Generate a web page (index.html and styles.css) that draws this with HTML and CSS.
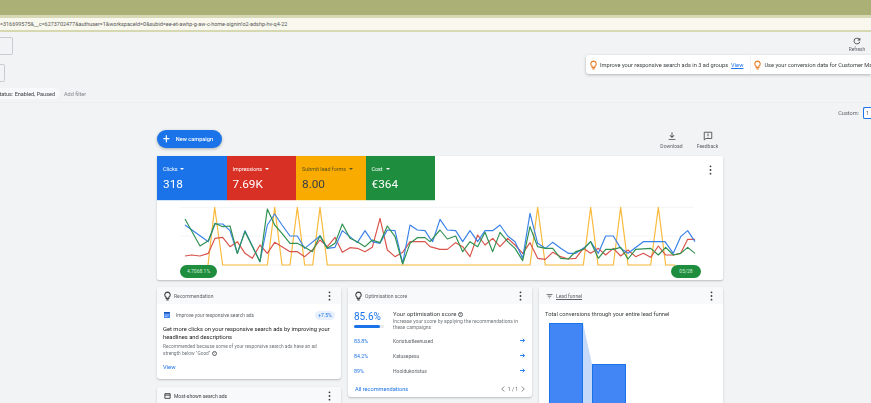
FILE: index.html
```html
<!DOCTYPE html>
<html lang="en">
<head>
<meta charset="utf-8">
<title>Overview</title>
<link rel="stylesheet" href="styles.css">
</head>
<body>
<div class="band"></div>
<div class="url">=316699575&amp;__c=6273702477&amp;authuser=1&amp;workspaceId=0&amp;subid=ee-et-awhp-g-aw-c-home-signin!o2-adshp-hv-q4-22</div>
<header class="toolbar">
  <div class="tb-left">
    <div class="stub stub-a"></div>
    <div class="stub stub-b"></div>
    <div class="filters">
      <span class="chip"><span>Campaign status: Enabled, Paused</span></span>
      <span class="add">Add filter</span>
    </div>
  </div>
  <div class="tb-right">
    <div class="refresh">
      <svg width="10" height="10" viewBox="0 0 24 24"><path fill="#444" d="M17.65 6.35A8 8 0 1 0 19.73 14h-2.08A6 6 0 1 1 12 6c1.66 0 3.14.69 4.22 1.78L13 11h7V4z"/></svg>
      <span>Refresh</span>
    </div>
    <div class="banner">
      <div class="tip">
        <svg class="bulb" width="7" height="10" viewBox="0 0 18 24"><path fill="none" stroke="#e8812b" stroke-width="2.8" d="M9 2a7 7 0 0 0-3.500 13v3h7v-3A7 7 0 0 0 9 2zM6 22h6"/></svg>
        <span>Improve your responsive search ads in 3 ad groups</span>
        <a class="view">View</a>
      </div>
      <div class="tip tip-b">
        <svg class="bulb" width="7" height="10" viewBox="0 0 18 24"><path fill="none" stroke="#e8812b" stroke-width="2.8" d="M9 2a7 7 0 0 0-3.500 13v3h7v-3A7 7 0 0 0 9 2zM6 22h6"/></svg>
        <span>Use your conversion data for Customer Match</span>
      </div>
    </div>
  </div>
</header>
<div class="custom"><span>Custom:</span><span class="date">1</span></div>

<main class="main">
  <div class="actions">
    <button class="new"><span class="plus">+</span><span>New campaign</span></button>
    <div class="act-icons">
      <div class="act">
        <svg width="10" height="10" viewBox="0 0 24 24"><path fill="#444" d="M11 3h2v10l3.500-3.500 1.400 1.400L12 16.800l-5.900-5.900 1.400-1.400L11 13zM4 19h16v2H4z"/></svg>
        <span>Download</span>
      </div>
      <div class="act">
        <svg width="10" height="10" viewBox="0 0 24 24"><path fill="none" stroke="#444" stroke-width="2" d="M3 3h18v15H7l-4 3.500z"/><path fill="#444" d="M11 6h2v6h-2zM11 13.500h2v2h-2z"/></svg>
        <span>Feedback</span>
      </div>
    </div>
  </div>

  <section class="perf">
    <div class="tiles">
      <div class="tile t-blue"><div class="lab">Clicks <i class="caret"></i></div><div class="val">318</div></div>
      <div class="tile t-red"><div class="lab">Impressions <i class="caret"></i></div><div class="val">7.69K</div></div>
      <div class="tile t-yellow"><div class="lab">Submit lead forms <i class="caret"></i></div><div class="val">8.00</div></div>
      <div class="tile t-green"><div class="lab">Cost <i class="caret"></i></div><div class="val">€364</div></div>
      <div class="tile-rest"><svg class="dots" width="3" height="10" viewBox="0 0 3 11"><circle cx="1.500" cy="1.500" r="1"/><circle cx="1.500" cy="5.500" r="1"/><circle cx="1.500" cy="9.500" r="1"/></svg></div>
    </div>
    <div class="chart">
      <svg class="plot" viewBox="21 0 1698 240" width="566" height="80">
        <g class="grid"><path d="M90 22H1630M90 108H1630M90 195H1630"/></g>
        <polyline class="l-yellow" points="174,195 194,22 218,195 352,195 374,22 396,195 420,195 442,22 464,195 488,195 510,22 532,195 1140,195 1163,22 1186,195 1300,195 1322,22 1344,195 1390,195 1412,22 1434,195 1502,195 1525,22 1547,195 1575,195"/>
        <polyline class="l-red" points="105,168 125,165 150,168 175,160 195,115 218,112 240,140 262,125 285,160 307,175 330,135 352,160 374,127 396,140 420,155 442,155 464,170 487,150 510,120 532,140 555,112 577,157 600,143 622,145 645,155 667,142 690,55 712,150 735,170 758,157 780,125 802,125 825,125 840,140 870,148 892,148 917,128 938,140 960,170 983,105 1005,135 1028,115 1050,140 1073,115 1095,135 1118,160 1140,128 1163,175 1186,178 1208,157 1232,170 1255,177 1277,175 1300,145 1322,160 1345,145 1367,165 1390,145 1412,168 1434,150 1457,170 1480,160 1502,172 1525,138 1547,165 1570,165 1592,160 1613,118 1635,118"/>
        <polyline class="l-blue" points="105,75 175,125 195,72 218,72 240,92 262,160 285,92 330,185 352,75 374,42 396,75 420,108 442,108 464,145 510,108 532,145 555,142 577,92 622,128 645,92 667,125 690,130 712,90 735,92 758,190 780,75 802,90 825,92 840,115 848,125 870,58 892,90 917,92 938,125 960,92 983,125 1005,92 1028,92 1050,75 1073,108 1095,125 1118,175 1140,40 1163,130 1186,145 1208,127 1232,145 1255,160 1277,160 1300,145 1322,125 1345,160 1367,108 1390,108 1412,145 1434,160 1480,125 1545,125 1570,160 1592,110 1613,92 1635,125"/>
        <polyline class="l-green" points="105,57 150,138 175,122 195,70 218,80 240,78 262,160 285,95 330,185 352,27 374,75 396,100 420,130 442,130 464,142 487,155 510,107 532,145 555,130 577,72 600,115 622,125 645,140 667,120 690,128 712,78 735,110 758,192 780,130 802,113 825,113 840,125 870,90 892,117 917,108 938,155 960,125 983,140 1005,97 1028,155 1050,97 1073,125 1095,145 1118,182 1140,80 1163,140 1186,145 1208,145 1232,175 1255,177 1277,155 1300,148 1322,125 1345,175 1367,148 1390,148 1412,142 1434,177 1457,148 1502,145 1525,165 1547,142 1570,165 1592,160 1613,142 1635,160"/>
      </svg>
      <span class="pill pill-l">4.7068.1%</span>
      <span class="pill pill-r">05/28</span>
    </div>
  </section>

  <div class="cards">
    <div class="col">
      <section class="card card-rec">
        <div class="card-h">
          <svg class="h-ico" width="7" height="10" viewBox="0 0 18 24"><path fill="none" stroke="#444" stroke-width="2.800" d="M9 2a7 7 0 0 0-3.500 13v3h7v-3A7 7 0 0 0 9 2zM6 22h6"/></svg>
          <span class="h-t">Recommendation</span>
          <svg class="dots" width="3" height="10" viewBox="0 0 3 11"><circle cx="1.500" cy="1.500" r="1"/><circle cx="1.500" cy="5.500" r="1"/><circle cx="1.500" cy="9.500" r="1"/></svg>
        </div>
        <div class="rec">
          <div class="rec-top">
            <svg class="rec-ico" width="6" height="6" viewBox="0 0 12 12"><path fill="#4285f4" d="M0 0h9l3 3v9H0z"/><path fill="#1a56b8" d="M0 0h12v3H0z"/><path stroke="#d2e3fc" stroke-width="1.200" d="M2 6h8M2 9h5"/></svg>
            <span class="rec-name">Improve your responsive search ads</span>
            <span class="badge">+7.5%</span>
          </div>
          <p class="rec-title">Get more clicks on your responsive search ads by improving your headlines and descriptions</p>
          <p class="rec-sub">Recommended because some of your responsive search ads have an ad strength below "Good" <span class="help">?</span></p>
          <a class="rec-view">View</a>
        </div>
      </section>
      <section class="card">
        <div class="card-h">
          <svg class="h-ico" width="7" height="8" viewBox="0 0 24 24"><path fill="none" stroke="#333" stroke-width="3" d="M3 4h18v16H3zM3 9h18"/></svg>
          <span class="h-t h-dark">Most-shown search ads</span>
          <svg class="dots" width="3" height="10" viewBox="0 0 3 11"><circle cx="1.500" cy="1.500" r="1"/><circle cx="1.500" cy="5.500" r="1"/><circle cx="1.500" cy="9.500" r="1"/></svg>
        </div>
      </section>
    </div>

    <section class="card card-opt col">
      <div class="card-h">
        <svg class="h-ico" width="7" height="10" viewBox="0 0 18 24"><path fill="none" stroke="#444" stroke-width="2.800" d="M9 2a7 7 0 0 0-3.500 13v3h7v-3A7 7 0 0 0 9 2zM6 22h6"/></svg>
        <span class="h-t">Optimisation score</span>
        <svg class="dots" width="3" height="10" viewBox="0 0 3 11"><circle cx="1.500" cy="1.500" r="1"/><circle cx="1.500" cy="5.500" r="1"/><circle cx="1.500" cy="9.500" r="1"/></svg>
      </div>
      <div class="opt">
        <div class="opt-top">
          <div class="opt-score">
            <div class="opt-num">85.6%</div>
            <div class="meter"><div class="meter-fill"></div></div>
          </div>
          <div class="opt-text">
            <div class="opt-title">Your optimisation score <span class="help">?</span></div>
            <div class="opt-sub">Increase your score by applying the recommendations in these campaigns</div>
          </div>
        </div>
        <div class="opt-row"><span class="pct">83.8%</span><span class="nm">Koristustleenused</span><svg class="arr" width="5" height="5" viewBox="0 0 10 10"><path fill="none" stroke="#1a73e8" stroke-width="1.800" d="M0 5h9M5.500 1.500L9 5 5.500 8.500"/></svg></div>
        <div class="opt-row"><span class="pct">84.2%</span><span class="nm">Katusepesu</span><svg class="arr" width="5" height="5" viewBox="0 0 10 10"><path fill="none" stroke="#1a73e8" stroke-width="1.800" d="M0 5h9M5.500 1.500L9 5 5.500 8.500"/></svg></div>
        <div class="opt-row"><span class="pct">89%</span><span class="nm">Hooldukoristus</span><svg class="arr" width="5" height="5" viewBox="0 0 10 10"><path fill="none" stroke="#1a73e8" stroke-width="1.800" d="M0 5h9M5.500 1.500L9 5 5.500 8.500"/></svg></div>
        <div class="opt-foot">
          <a class="all">All recommendations</a>
          <span class="pager">
            <svg width="4" height="6" viewBox="0 0 8 12"><path fill="none" stroke="#5f6368" stroke-width="1.500" d="M6.500 1L1.500 6l5 5"/></svg>
            <span>1 / 1</span>
            <svg width="4" height="6" viewBox="0 0 8 12"><path fill="none" stroke="#5f6368" stroke-width="1.500" d="M1.500 1l5 5-5 5"/></svg>
          </span>
        </div>
      </div>
    </section>

    <section class="card card-fun col">
      <div class="card-h">
        <svg class="h-ico" width="7" height="8" viewBox="0 0 24 24"><path fill="#555" d="M2 5h20v2.500H2zM6 11h12v2.500H6zM10 17h4v2.500h-4z"/></svg>
        <span class="h-t h-und">Lead funnel</span>
        <svg class="dots" width="3" height="10" viewBox="0 0 3 11"><circle cx="1.500" cy="1.500" r="1"/><circle cx="1.500" cy="5.500" r="1"/><circle cx="1.500" cy="9.500" r="1"/></svg>
      </div>
      <div class="fun">
        <p class="fun-t">Total conversions through your entire lead funnel</p>
        <div class="bars">
          <div class="bar bar-a"></div>
          <svg class="wedge" width="9" height="80" viewBox="0 0 9 80" preserveAspectRatio="none"><path fill="#c6d9f8" d="M0 0L9 41V80H0z"/></svg>
          <div class="bar bar-b"></div>
        </div>
      </div>
    </section>
  </div>
</main>
</body>
</html>
```

FILE: styles.css
```css
* { box-sizing: border-box; }
html, body { margin: 0; padding: 0; height: 100%; overflow: hidden; }
body { width: 871px; height: 403px; background: #f1f3f4; font-family: Roboto, "Liberation Sans", sans-serif; color: #3c4043; filter: blur(0.3px); }
p { margin: 0; }

.band { height: 18px; background: #abb176; border-bottom: 3px solid #d6d9b4; }
.url { height: 14px; background: #f8f8ee; border-bottom: 2px solid #d5d8b0; font-size: 5.45px; line-height: 12px; color: #555; white-space: nowrap; overflow: hidden; }

.toolbar { height: 71px; display: flex; justify-content: space-between; border-bottom: 1px solid #eceef0; }
.tb-left { display: flex; flex-direction: column; }
.stub { border: 1px solid #c9cccf; border-left: 0; border-radius: 0 2px 2px 0; height: 18px; }
.stub-a { width: 13px; margin-top: 5px; }
.stub-b { width: 5px; margin-top: 9px; }
.filters { display: flex; align-items: center; margin-top: 6px; font-size: 5.5px; }
.chip { width: 60px; height: 11px; background: #f8f9fa; border-radius: 0 6px 6px 0; display: flex; justify-content: flex-end; align-items: center; overflow: hidden; white-space: nowrap; padding-right: 5px; color: #3c4043; }
.chip span { flex: none; }
.add { margin-left: 4px; color: #80868b; }

.tb-right { width: 285px; display: flex; flex-direction: column; align-items: flex-end; }
.refresh { width: 28px; height: 23px; padding-top: 4px; display: flex; flex-direction: column; align-items: center; gap: 1px; font-size: 4.8px; color: #5f6368; line-height: 6px; }
.banner { width: 285px; height: 19px; background: #fff; border-radius: 3px 0 0 3px; box-shadow: 0 1px 3px rgba(60,64,67,.35); display: flex; align-items: center; overflow: hidden; white-space: nowrap; font-size: 5.7px; color: #3c4043; padding-left: 4px; }
.tip { display: flex; align-items: center; gap: 3px; flex: none; }
.tip-b { margin-left: 7px; padding-left: 3px; border-left: 1px solid #f1f3f4; height: 19px; }
.bulb { flex: none; }
.view { margin-left: 0; color: #1a73e8; text-decoration: underline; }

.custom { height: 20px; display: flex; justify-content: flex-end; align-items: center; font-size: 5.6px; color: #5f6368; gap: 4px; }
.date { width: 8px; height: 12px; border: 1px solid #1a73e8; border-right: 0; border-radius: 2px 0 0 2px; background: #fff; padding-left: 2px; line-height: 10px; }

.main { width: 566px; margin-left: 157px; }
.actions { height: 27px; margin-top: 6px; display: flex; justify-content: space-between; align-items: flex-start; }
.new { height: 18px; width: 65px; margin-top: 1px; border: 0; padding: 0 0 0 6px; background: #1a73e8; color: #fff; border-radius: 9px; box-shadow: 0 1px 3px rgba(60,64,67,.4); display: flex; align-items: center; gap: 6px; font: 500 5.6px Roboto, sans-serif; }
.plus { font-size: 12px; font-weight: 400; line-height: 1; }
.act-icons { display: flex; gap: 13px; margin-right: 4px; margin-top: 2px; }
.act { display: flex; flex-direction: column; align-items: center; width: 23px; font-size: 5px; color: #5f6368; gap: 2px; line-height: 6px; }

.perf { background: #fff; height: 124px; border-radius: 2px; box-shadow: 0 1px 2px rgba(60,64,67,.3); position: relative; }
.tiles { display: flex; height: 44px; }
.tile { width: 69.5px; padding: 8.5px 6px 0; color: #fff; }
.tile-rest { flex: 1; display: flex; justify-content: flex-end; padding: 9px 11px 0 0; }
.lab { font-size: 5.4px; display: flex; align-items: center; gap: 3px; line-height: 8px; }
.caret { border: 2px solid transparent; border-top: 2.5px solid currentColor; border-bottom: 0; width: 0; height: 0; }
.val { font-size: 11.8px; margin-top: 4px; line-height: 15px; font-weight: 400; }
.t-blue { background: #1a73e8; box-shadow: 0 1px 0 #d2e3fc; }
.t-red { background: #d93025; box-shadow: 0 1px 0 #fad2cf; }
.t-yellow { background: #f9ab00; color: #3c4043; box-shadow: 0 1px 0 #feefc3; }
.t-green { background: #1e8e3e; box-shadow: 0 1px 0 #ceead6; }
.t-yellow .lab { color: #5c5320; }
.dots { fill: #3c4043; flex: none; }

.chart { height: 80px; }
.plot { display: block; }
.plot polyline { fill: none; stroke-width: 3.5; stroke-linejoin: round; }
.grid path { stroke: #eceef0; stroke-width: 2; fill: none; }
.l-red { stroke: #d9534a; }
.l-yellow { stroke: #f9b93a; }
.l-blue { stroke: #3b82e8; }
.l-green { stroke: #2e9150; }
.pill { position: absolute; top: 109px; height: 13px; background: #1e8e3e; color: #cfe8d6; border-radius: 7px; font-size: 5px; line-height: 13px; text-align: center; }
.pill-l { left: 23px; width: 37px; }
.pill-r { left: 514px; width: 30px; }

.cards { display: flex; gap: 7px; margin-top: 7px; }
.col { width: 184px; flex: none; }
.col:first-child { display: flex; flex-direction: column; gap: 8px; }
.card { background: #fff; border-radius: 3px; box-shadow: 0 1px 2px rgba(60,64,67,.3); }
.card-rec { height: 92px; }
.card-opt { height: 110px; }
.card-fun { height: 130px; }
.card-h { height: 17px; background: #f8f9fa; display: flex; align-items: center; padding: 0 10px 0 7px; font-size: 5px; color: #5f6368; gap: 3px; border-radius: 3px 3px 0 0; flex: none; }
.h-t { flex: 1; }
.h-dark { color: #3c4043; }
.h-und { text-decoration: underline; }

.rec { padding: 6.5px 6px 0 6px; }
.rec-top { display: flex; align-items: center; gap: 6px; font-size: 4.9px; color: #5f6368; height: 9px; }
.rec-ico { flex: none; margin-left: 1px; }
.rec-name { flex: 1; }
.badge { background: #e8f0fe; color: #1a73e8; border-radius: 5px; width: 20px; height: 9px; line-height: 9px; text-align: center; font-size: 5px; }
.rec-title { font-size: 5.8px; line-height: 8px; color: #202124; margin-top: 5.5px; }
.rec-sub { font-size: 4.8px; line-height: 7px; color: #70757a; margin-top: 1.5px; }
.help { display: inline-block; width: 5px; height: 5px; border: 0.5px solid #5f6368; border-radius: 50%; font-size: 3.5px; line-height: 4px; text-align: center; vertical-align: middle; }
.rec-view { display: block; font-size: 5.8px; line-height: 8px; color: #1a73e8; margin-top: 6.5px; }

.opt { padding: 6px 7px 0 6px; }
.opt-top { display: flex; height: 23px; }
.opt-score { width: 39px; flex: none; padding-top: 1px; }
.opt-num { font-size: 10px; line-height: 12px; color: #1a73e8; }
.meter { width: 30px; height: 2.5px; background: #e8eaed; margin-top: 2px; border-radius: 2px; }
.meter-fill { width: 86%; height: 100%; background: #1a73e8; border-radius: 2px; }
.opt-title { font-size: 6px; line-height: 7px; color: #3c4043; }
.opt-sub { font-size: 5px; line-height: 6.5px; color: #70757a; margin-top: 0.5px; }
.opt-row { display: flex; align-items: center; height: 15px; font-size: 5px; }
.pct { width: 39px; color: #1a73e8; font-size: 5.3px; }
.nm { flex: 1; color: #5f6368; }
.arr { flex: none; }
.opt-foot { display: flex; justify-content: space-between; align-items: center; margin-top: 4.5px; font-size: 5.6px; height: 12px; }
.all { color: #1a73e8; padding-left: 1px; }
.pager { color: #5f6368; display: flex; align-items: center; gap: 3px; font-size: 5px; }

.fun { padding: 6.5px 6px 0; }
.fun-t { font-size: 5.75px; line-height: 7px; color: #3c4043; }
.bars { display: flex; margin-top: 5.5px; padding-left: 4px; align-items: flex-start; height: 100px; }
.bar { background: #4285f4; border: 1px solid #1a73e8; width: 34px; flex: none; }
.bar-a { height: 100px; }
.bar-b { height: 100px; margin-top: 41px; }
.wedge { flex: none; }
```
